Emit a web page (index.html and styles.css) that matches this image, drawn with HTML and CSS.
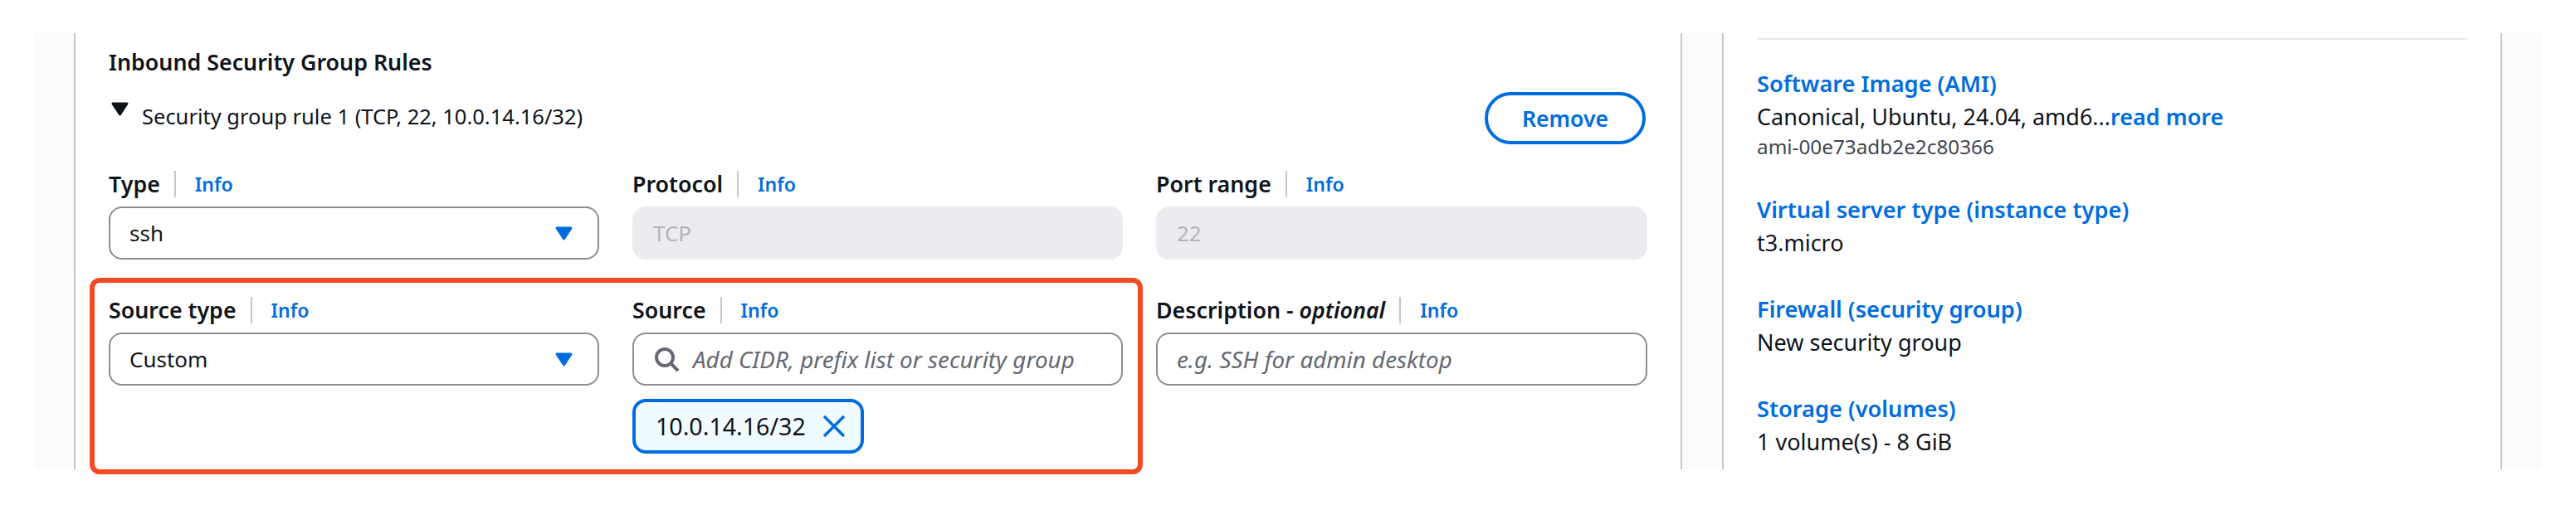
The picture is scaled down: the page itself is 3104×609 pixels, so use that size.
FILE: index.html
```html
<!DOCTYPE html>
<html lang="en">

<head>
	<meta charset="UTF-8">
	<title>Launch an instance</title>
	<link rel="stylesheet" href="styles.css">
</head>

<body>
	<div class="page">
		<div class="shell">
			<!-- security group rule form -->
			<section class="panel main">
				<div class="rule-head">
					<div class="rule-text">
						<h3 class="rule-title">Inbound Security Group Rules</h3>
						<div class="expander">
							<svg class="caret" viewBox="0 0 21 17"><polygon points="2,2 19,2 10.5,15" /></svg>
							<span>Security group rule 1 (TCP, 22, 10.0.14.16/32)</span>
						</div>
					</div>
					<button class="btn">Remove</button>
				</div>

				<div class="fields">
					<div class="field">
						<div class="label"><b>Type</b><a class="info">Info</a></div>
						<div class="input select">
							<span>ssh</span>
							<svg class="arrow" viewBox="0 0 21 17"><polygon points="2,2 19,2 10.5,15" /></svg>
						</div>
					</div>
					<div class="field">
						<div class="label"><b>Protocol</b><a class="info">Info</a></div>
						<div class="input disabled">TCP</div>
					</div>
					<div class="field">
						<div class="label"><b>Port range</b><a class="info">Info</a></div>
						<div class="input disabled">22</div>
					</div>
				</div>

				<div class="fields second">
					<div class="field">
						<div class="label"><b>Source type</b><a class="info">Info</a></div>
						<div class="input select">
							<span>Custom</span>
							<svg class="arrow" viewBox="0 0 21 17"><polygon points="2,2 19,2 10.5,15" /></svg>
						</div>
					</div>
					<div class="field">
						<div class="label"><b>Source</b><a class="info">Info</a></div>
						<div class="input placeholder">
							<svg class="search" viewBox="0 0 16 16">
								<circle cx="7" cy="7" r="5" />
								<line x1="10.6" y1="10.6" x2="15" y2="15" />
							</svg>
							<span>Add CIDR, prefix list or security group</span>
						</div>
						<div class="token">
							<span>10.0.14.16/32</span>
							<svg class="dismiss" viewBox="0 0 16 16"><path d="m2 2 12 12M14 2 2 14" /></svg>
						</div>
					</div>
					<div class="field">
						<div class="label"><b>Description - <i>optional</i></b><a class="info">Info</a></div>
						<div class="input placeholder">
							<span>e.g. SSH for admin desktop</span>
						</div>
					</div>
				</div>
			</section>

			<!-- summary -->
			<aside class="panel side">
				<div class="divider"></div>
				<div class="item">
					<a class="item-title">Software Image (AMI)</a>
					<p>Canonical, Ubuntu, 24.04, amd6...<a class="more">read more</a></p>
					<p class="sub">ami-00e73adb2e2c80366</p>
				</div>
				<div class="item">
					<a class="item-title">Virtual server type (instance type)</a>
					<p>t3.micro</p>
				</div>
				<div class="item">
					<a class="item-title">Firewall (security group)</a>
					<p>New security group</p>
				</div>
				<div class="item">
					<a class="item-title">Storage (volumes)</a>
					<p>1 volume(s) - 8 GiB</p>
				</div>
			</aside>
		</div>

		<div class="highlight"></div>
	</div>
</body>

</html>
```

FILE: styles.css
```css
body,
h3,
p {
	margin: 0;
	padding: 0;
}

body {
	background: #fff;
	color: #0f141a;
	font: 28px/40px "Noto Sans", "Open Sans", sans-serif;
}

.page {
	position: relative;
	height: 609px;
	padding: 40px 41px 0;
	box-sizing: border-box;
}

.shell {
	display: flex;
	gap: 48px;
	height: 526px;
	padding: 0 48px;
	overflow: hidden;
	background: #fbfbfb;
}

.panel {
	background: #fff;
	border-left: 2px solid #c6c6cd;
	border-right: 2px solid #c6c6cd;
	box-sizing: border-box;
}

.main {
	width: 1938px;
	padding: 15px 40px 0;
}

.side {
	width: 940px;
	padding: 6px 40px 0;
}

/* rule header */
.rule-head {
	display: flex;
	justify-content: space-between;
	align-items: flex-end;
}

.rule-text {
	padding-bottom: 14px;
}

.rule-title {
	font-size: 26.8px;
	font-weight: 600;
	line-height: 40px;
}

.expander {
	display: flex;
	gap: 16px;
	margin-top: 25px;
	font-size: 25.5px;
}

.caret {
	width: 21px;
	height: 17px;
	margin-top: 3px;
	margin-left: 3px;
	fill: #0f141a;
	stroke: #0f141a;
	stroke-width: 3;
	stroke-linejoin: round;
}

.btn {
	width: 194px;
	height: 63px;
	margin-right: 2px;
	padding: 0;
	color: #006ce0;
	font: 600 26.6px/40px "Noto Sans", sans-serif;
	background: #fff;
	border: 4px solid #006ce0;
	border-radius: 32px;
}

/* fields */
.fields {
	display: grid;
	grid-template-columns: 591px 591px 592px;
	gap: 40px;
	margin-top: 32px;
}

.fields.second {
	margin-top: 45px;
}

.label {
	display: flex;
	align-items: center;
	height: 32px;
	margin-bottom: 11px;
	font-size: 26.8px;
}

.label b {
	padding-right: 17px;
	font-weight: 600;
	border-right: 2px solid #c6c6cd;
	line-height: 32px;
}

.info {
	margin-left: 23px;
	color: #006ce0;
	font-size: 23px;
	font-weight: 600;
}

.input {
	display: flex;
	align-items: center;
	height: 64px;
	padding: 0 23px;
	font-size: 26px;
	background: #fff;
	border: 2px solid #8c8c94;
	border-radius: 16px;
	box-sizing: border-box;
}

.select {
	justify-content: space-between;
}

.arrow {
	width: 21px;
	height: 17px;
	margin-right: 7px;
	fill: #006ce0;
	stroke: #006ce0;
	stroke-width: 3;
	stroke-linejoin: round;
}

.disabled {
	color: #b4b4bb;
	background: #ebebf0;
	border-color: #ebebf0;
}

.placeholder {
	color: #656871;
	font-size: 27.8px;
	font-style: italic;
}

.search {
	width: 32px;
	height: 32px;
	margin-right: 16px;
	fill: none;
	stroke: #656871;
	stroke-width: 2;
}

.token {
	display: inline-flex;
	align-items: center;
	gap: 18px;
	height: 66px;
	margin-top: 16px;
	padding: 0 16px 0 24px;
	font-size: 28.6px;
	background: #f0fbff;
	border: 4px solid #006ce0;
	border-radius: 16px;
	box-sizing: border-box;
}

.dismiss {
	width: 32px;
	height: 32px;
	fill: none;
	stroke: #006ce0;
	stroke-width: 1.7;
}

/* summary */
.divider {
	height: 2px;
	margin-bottom: 33px;
	background: #e8e8ed;
}

.item {
	margin-bottom: 40px;
}

.item-title {
	display: block;
	color: #006ce0;
	font-weight: 600;
	font-size: 27.2px;
}

.item p {
	font-size: 27px;
}

.more {
	color: #006ce0;
	font-weight: 600;
}

.item .sub {
	color: #424650;
	font-size: 24.3px;
	line-height: 32px;
}

/* red box drawn over the screenshot */
.highlight {
	position: absolute;
	left: 108px;
	top: 335px;
	width: 1269px;
	height: 237px;
	border: 6px solid #f44a22;
	border-radius: 12px;
	box-sizing: border-box;
}
```
